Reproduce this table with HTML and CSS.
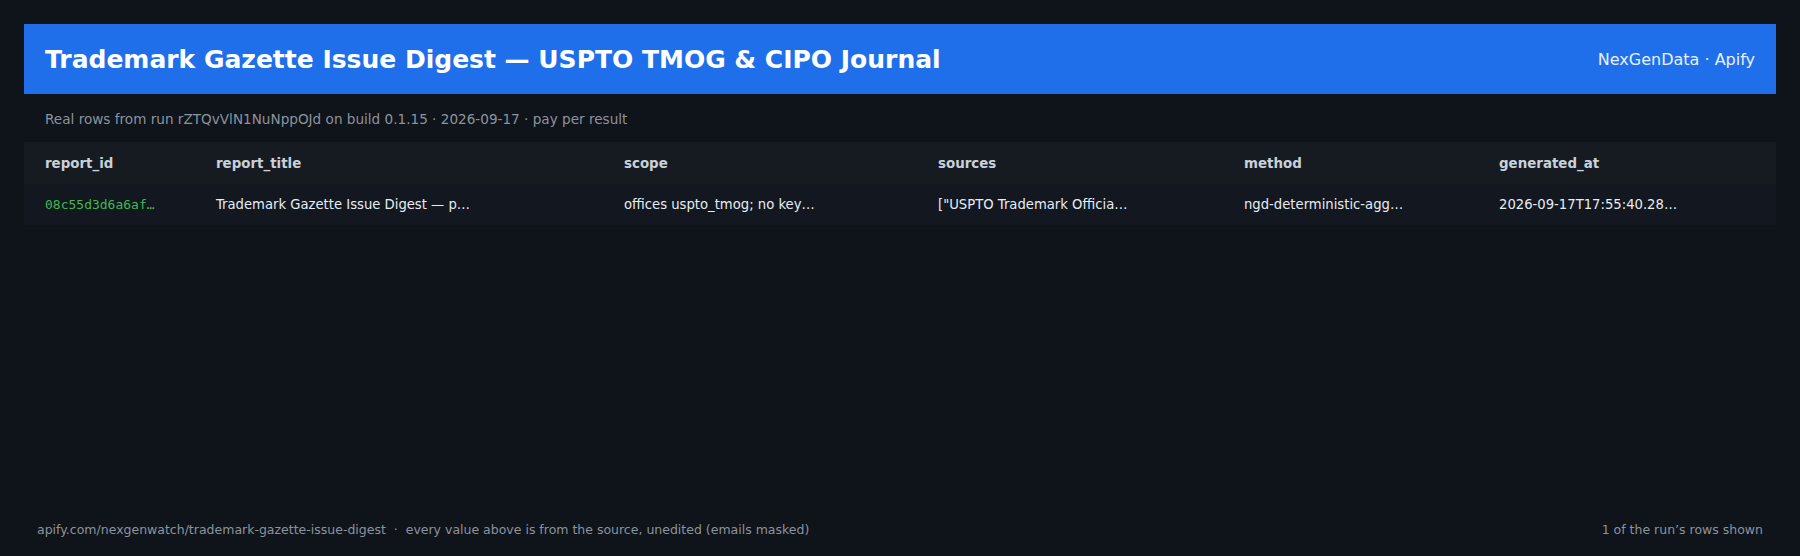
FILE: index.html
```html
<!DOCTYPE html>
<html lang="en">
<head>
<meta charset="utf-8">
<title>Trademark Gazette Issue Digest</title>
<link rel="stylesheet" href="styles.css">
</head>
<body>
<div class="page">
  <header class="banner">
    <h1 class="title">Trademark Gazette Issue Digest — USPTO TMOG &amp; CIPO Journal</h1>
    <div class="brand">NexGenData · Apify</div>
  </header>
  <p class="subtitle">Real rows from run rZTQvVlN1NuNppOJd on build 0.1.15 · 2026-09-17 · pay per result</p>
  <div class="table">
    <div class="row head">
      <div class="cell">report_id</div>
      <div class="cell">report_title</div>
      <div class="cell">scope</div>
      <div class="cell">sources</div>
      <div class="cell">method</div>
      <div class="cell">generated_at</div>
    </div>
    <div class="row body">
      <div class="cell mono">08c55d3d6a6af…</div>
      <div class="cell">Trademark Gazette Issue Digest — p…</div>
      <div class="cell">offices uspto_tmog; no key…</div>
      <div class="cell">["USPTO Trademark Officia…</div>
      <div class="cell">ngd-deterministic-agg…</div>
      <div class="cell">2026-09-17T17:55:40.28…</div>
    </div>
  </div>
  <footer class="footer">
    <span>apify.com/nexgenwatch/trademark-gazette-issue-digest &nbsp;·&nbsp; every value above is from the source, unedited (emails masked)</span>
    <span>1 of the run’s rows shown</span>
  </footer>
</div>
</body>
</html>
```

FILE: styles.css
```css
html, body {
  margin: 0;
  padding: 0;
  background: #0f131a;
}
body {
  font-family: "DejaVu Sans", "Noto Sans", sans-serif;
  color: #e6edf3;
}
.page {
  box-sizing: border-box;
  height: 556px;
  padding: 24px 24px 0;
  display: flex;
  flex-direction: column;
}
.banner {
  height: 70px;
  box-sizing: border-box;
  background: #1f6feb;
  padding: 0 21px;
  display: flex;
  align-items: center;
  justify-content: space-between;
}
.title {
  margin: 0;
  font-size: 25px;
  font-weight: bold;
  color: #ffffff;
}
.brand {
  font-size: 16px;
  color: #e8f0ff;
}
.subtitle {
  margin: 0;
  padding: 17px 21px 0;
  height: 33px;
  box-sizing: border-box;
  font-size: 13.6px;
  line-height: 16px;
  color: #8b949e;
}
.table {
  margin-top: 15px;
}
.row {
  display: grid;
  grid-template-columns: 171px 408px 314px 306px 255px 1fr;
  align-items: center;
}
.row.head {
  height: 42px;
  background: #161b22;
  font-weight: bold;
  color: #c9d1d9;
  font-size: 13.4px;
}
.row.body {
  height: 41px;
  background: #121720;
  font-size: 13.2px;
  color: #e6edf3;
}
.cell {
  padding-left: 21px;
  white-space: nowrap;
}
.mono {
  font-family: "DejaVu Sans Mono", monospace;
  font-size: 13px;
  color: #3fb950;
}
.footer {
  margin-top: auto;
  display: flex;
  justify-content: space-between;
  padding: 0 13px 19px;
  font-size: 12.5px;
  line-height: 14px;
  color: #8b949e;
}
```
